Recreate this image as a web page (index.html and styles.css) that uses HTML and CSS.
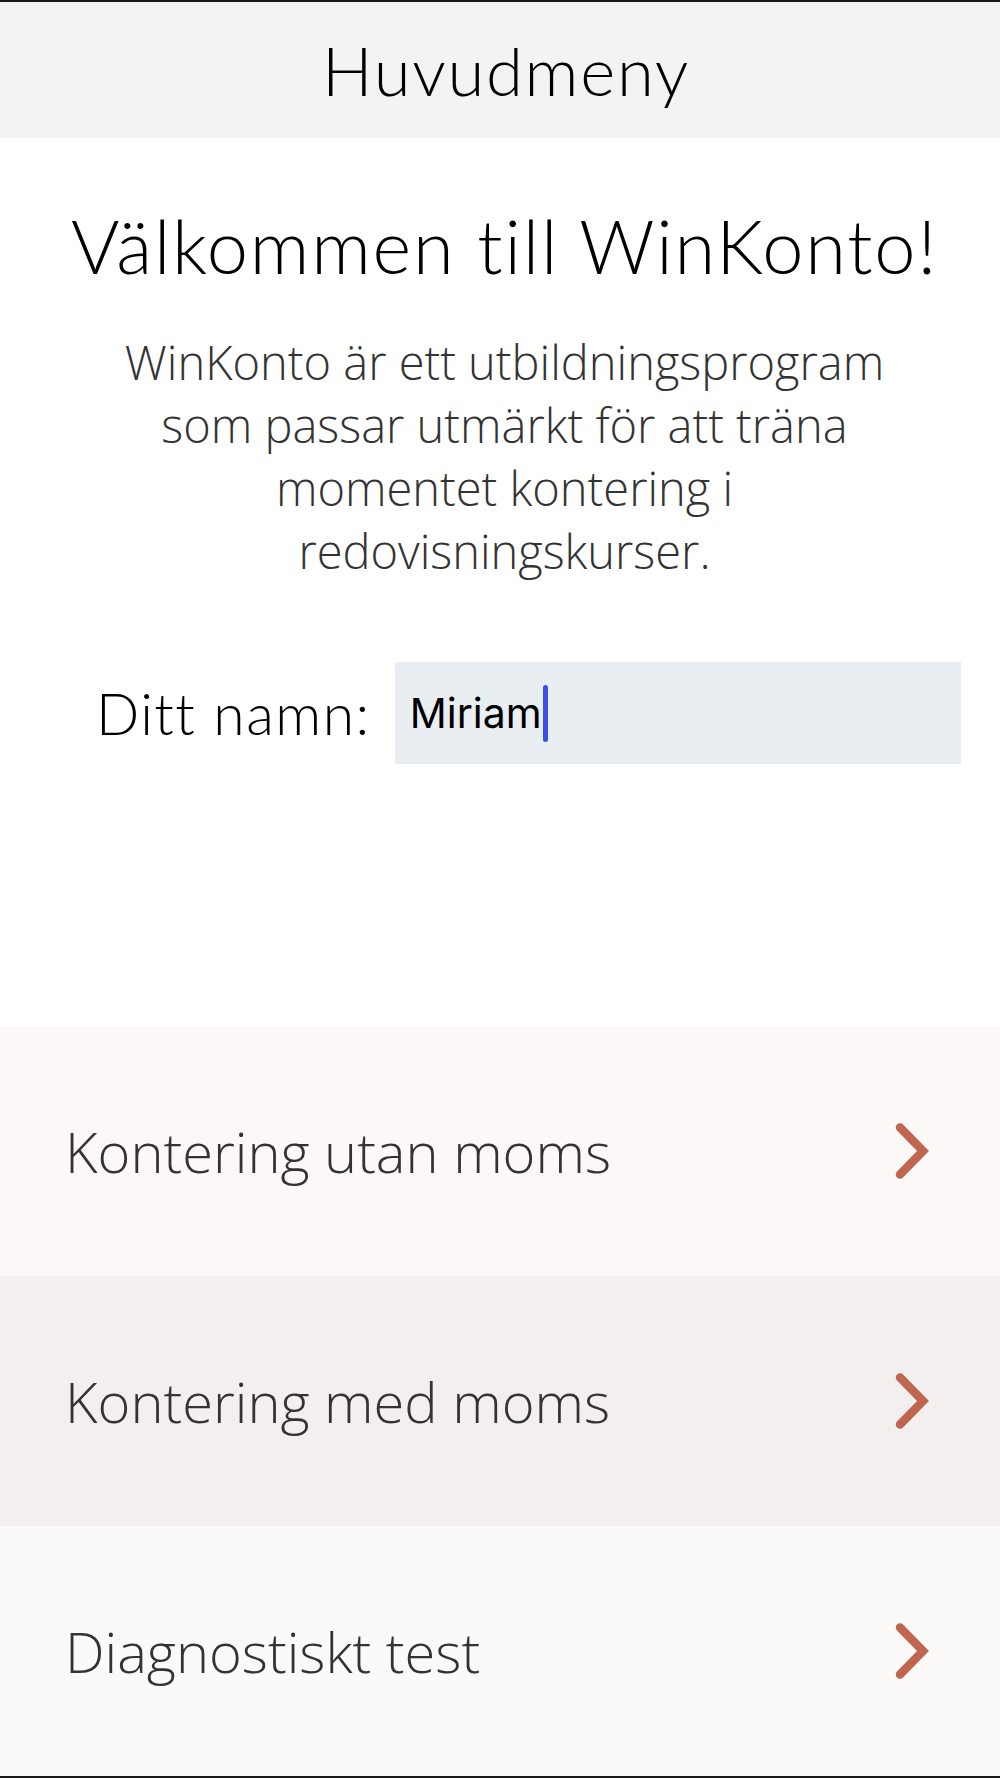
FILE: index.html
```html
<!DOCTYPE html>
<html lang="sv">
<head>
<meta charset="utf-8">
<title>Huvudmeny</title>
<link rel="stylesheet" href="styles.css">
</head>
<body>
<div class="screen">
  <header class="topbar">
    <h1 class="topbar-title">Huvudmeny</h1>
  </header>
  <main class="content">
    <h2 class="welcome">Välkommen till WinKonto!</h2>
    <p class="intro">WinKonto är ett utbildningsprogram<br>som passar utmärkt för att träna<br>momentet kontering i<br>redovisningskurser.</p>
    <div class="name-row">
      <label class="name-label">Ditt namn:</label>
      <div class="name-input"><span class="name-value">Miriam</span><span class="caret"></span></div>
    </div>
  </main>
  <nav class="menu">
    <a class="menu-item tone-a">
      <span class="menu-text">Kontering utan moms</span>
      <svg class="chev" width="34" height="56" viewBox="0 0 34 56"><path d="M5 4.5 L28 28 L5 51.5" fill="none" stroke="#c0654f" stroke-width="8.5" stroke-linecap="round" stroke-linejoin="miter"/></svg>
    </a>
    <a class="menu-item tone-b">
      <span class="menu-text">Kontering med moms</span>
      <svg class="chev" width="34" height="56" viewBox="0 0 34 56"><path d="M5 4.5 L28 28 L5 51.5" fill="none" stroke="#c0654f" stroke-width="8.5" stroke-linecap="round" stroke-linejoin="miter"/></svg>
    </a>
    <a class="menu-item tone-c">
      <span class="menu-text">Diagnostiskt test</span>
      <svg class="chev" width="34" height="56" viewBox="0 0 34 56"><path d="M5 4.5 L28 28 L5 51.5" fill="none" stroke="#c0654f" stroke-width="8.5" stroke-linecap="round" stroke-linejoin="miter"/></svg>
    </a>
  </nav>
</div>
</body>
</html>
```
FILE: styles.css
```css
* { box-sizing: border-box; }
html, body { margin: 0; padding: 0; background: #ffffff; }
.screen {
  width: 1000px;
  height: 1778px;
  display: flex;
  flex-direction: column;
  border-top: 2px solid #1a1a1a;
  border-bottom: 2px solid #1a1a1a;
  background: #ffffff;
}
.topbar {
  height: 136px;
  background: #f3f3f3;
  display: flex;
  align-items: center;
  justify-content: center;
  padding-left: 12px;
}
.topbar-title {
  margin: 0;
  font-family: Lato, "Liberation Sans", sans-serif;
  font-weight: 300;
  font-size: 67px;
  letter-spacing: 1.7px;
  line-height: 136px;
  color: #000;
}
.content {
  display: flex;
  flex-direction: column;
  align-items: center;
  padding-left: 9px;
}
.welcome {
  margin: 64px 0 0;
  font-family: Lato, "Liberation Sans", sans-serif;
  font-weight: 300;
  font-size: 74px;
  letter-spacing: 1.8px;
  line-height: 88px;
  color: #000;
  text-align: center;
}
.intro {
  margin: 41px 0 0;
  font-family: "Open Sans", "Liberation Sans", sans-serif;
  font-weight: 300;
  font-size: 47px;
  line-height: 63px;
  color: #333;
  text-align: center;
}
.name-row {
  align-self: stretch;
  margin: 79px 0 0 -9px;
  padding: 0 39px 0 96px;
  display: flex;
  align-items: center;
  gap: 24px;
}
.name-label {
  font-family: Lato, "Liberation Sans", sans-serif;
  font-weight: 300;
  font-size: 57px;
  letter-spacing: 1.5px;
  color: #000;
}
.name-input {
  flex: 1;
  height: 102px;
  background: #e9eef3;
  display: flex;
  align-items: center;
  padding-left: 15px;
}
.name-value {
  font-family: Inter, Roboto, "Liberation Sans", sans-serif;
  font-size: 41px;
  color: #000;
}
.caret {
  display: inline-block;
  width: 5px;
  height: 57px;
  margin-left: 1px;
  border-radius: 3px;
  background: #3b4ee8;
}
.menu {
  margin-top: auto;
  display: flex;
  flex-direction: column;
}
.menu-item {
  height: 250px;
  display: flex;
  align-items: center;
  justify-content: space-between;
  padding: 0 71px 0 65px;
  text-decoration: none;
}
.tone-a { background: #fbf8f7; }
.tone-b { background: #f2efee; }
.tone-c { background: #fcfaf9; }
.menu-text {
  font-family: "Open Sans", "Liberation Sans", sans-serif;
  font-weight: 300;
  font-size: 56px;
  color: #333;
}
.chev { display: block; }
```
